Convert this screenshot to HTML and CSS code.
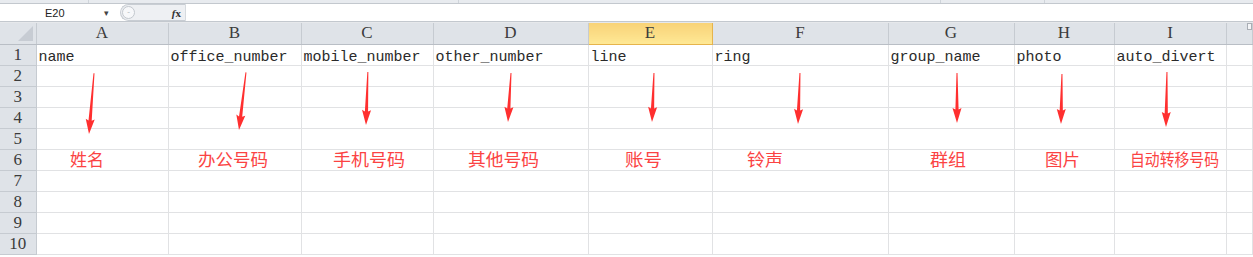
FILE: index.html
```html
<!DOCTYPE html>
<html lang="zh-CN">
<head>
    <meta charset="UTF-8">
    <title>通讯录导入模板</title>
    <link rel="stylesheet" href="styles.css">
</head>
<body>
    <div class="ribbon-edge">
        <span class="sep" style="left: 88px"></span>
        <span class="sep" style="left: 458px"></span>
        <span class="sep" style="left: 940px"></span>
        <span class="sep" style="left: 1044px"></span>
    </div>

    <div class="formula-bar">
        <div class="name-box">
            <span class="cell-ref">E20</span>
            <span class="drop">&#9662;</span>
        </div>
        <div class="fx-zone">
            <span class="grip">-</span>
            <span class="fx"><i>f</i>x</span>
        </div>
        <div class="formula-input"></div>
    </div>

    <div class="sheet">
        <table class="grid">
            <colgroup>
                <col class="c-row">
                <col style="width: 132px">
                <col style="width: 133px">
                <col style="width: 132px">
                <col style="width: 155px">
                <col style="width: 124px">
                <col style="width: 176px">
                <col style="width: 126px">
                <col style="width: 100px">
                <col style="width: 112px">
                <col>
            </colgroup>
            <thead>
                <tr>
                    <th class="corner"><span class="tri"></span></th>
                    <th>A</th>
                    <th>B</th>
                    <th>C</th>
                    <th>D</th>
                    <th class="active">E</th>
                    <th>F</th>
                    <th>G</th>
                    <th>H</th>
                    <th>I</th>
                    <th class="split"><span class="split-box"></span></th>
                </tr>
            </thead>
            <tbody>
                <tr>
                    <th>1</th>
                    <td>name</td>
                    <td>office_number</td>
                    <td>mobile_number</td>
                    <td>other_number</td>
                    <td>line</td>
                    <td>ring</td>
                    <td>group_name</td>
                    <td>photo</td>
                    <td>auto_divert</td>
                    <td></td>
                </tr>
                <tr><th>2</th><td></td><td></td><td></td><td></td><td></td><td></td><td></td><td></td><td></td><td></td></tr>
                <tr><th>3</th><td></td><td></td><td></td><td></td><td></td><td></td><td></td><td></td><td></td><td></td></tr>
                <tr><th>4</th><td></td><td></td><td></td><td></td><td></td><td></td><td></td><td></td><td></td><td></td></tr>
                <tr><th>5</th><td></td><td></td><td></td><td></td><td></td><td></td><td></td><td></td><td></td><td></td></tr>
                <tr><th>6</th><td></td><td></td><td></td><td></td><td></td><td></td><td></td><td></td><td></td><td></td></tr>
                <tr><th>7</th><td></td><td></td><td></td><td></td><td></td><td></td><td></td><td></td><td></td><td></td></tr>
                <tr><th>8</th><td></td><td></td><td></td><td></td><td></td><td></td><td></td><td></td><td></td><td></td></tr>
                <tr><th>9</th><td></td><td></td><td></td><td></td><td></td><td></td><td></td><td></td><td></td><td></td></tr>
                <tr><th>10</th><td></td><td></td><td></td><td></td><td></td><td></td><td></td><td></td><td></td><td></td></tr>
            </tbody>
        </table>

        <!-- annotations drawn over the sheet -->
        <svg class="notes" width="1253" height="257" viewBox="0 0 1253 257">
            <g class="arrows">
                <polygon transform="translate(89 134) rotate(4.7)" points="0,0 -4.5,-15 -1.6,-13.5 -0.5,-61 0.5,-61 1.6,-13.5 4.5,-15"/>
                <polygon transform="translate(239 130) rotate(6.9)" points="0,0 -4.5,-15 -1.6,-13.5 -0.5,-58 0.5,-58 1.6,-13.5 4.5,-15"/>
                <polygon transform="translate(366 125) rotate(2)" points="0,0 -4.5,-15 -1.6,-13.5 -0.5,-53 0.5,-53 1.6,-13.5 4.5,-15"/>
                <polygon transform="translate(508 122) rotate(3.5)" points="0,0 -4.5,-15 -1.6,-13.5 -0.5,-49 0.5,-49 1.6,-13.5 4.5,-15"/>
                <polygon transform="translate(652 122) rotate(2.3)" points="0,0 -4.5,-15 -1.6,-13.5 -0.5,-49 0.5,-49 1.6,-13.5 4.5,-15"/>
                <polygon transform="translate(798 124) rotate(2.2)" points="0,0 -4.5,-15 -1.6,-13.5 -0.5,-51 0.5,-51 1.6,-13.5 4.5,-15"/>
                <polygon transform="translate(957 123)" points="0,0 -4.5,-15 -1.6,-13.5 -0.5,-50 0.5,-50 1.6,-13.5 4.5,-15"/>
                <polygon transform="translate(1061 124) rotate(1.1)" points="0,0 -4.5,-15 -1.6,-13.5 -0.5,-50 0.5,-50 1.6,-13.5 4.5,-15"/>
                <polygon transform="translate(1166 127) rotate(1)" points="0,0 -4.5,-15 -1.6,-13.5 -0.5,-55 0.5,-55 1.6,-13.5 4.5,-15"/>
            </g>
            <g class="labels">
                <text x="70" y="166" textLength="34" lengthAdjust="spacingAndGlyphs">姓名</text>
                <text x="198" y="166" textLength="70" lengthAdjust="spacingAndGlyphs">办公号码</text>
                <text x="333" y="166" textLength="72" lengthAdjust="spacingAndGlyphs">手机号码</text>
                <text x="468" y="166" textLength="71" lengthAdjust="spacingAndGlyphs">其他号码</text>
                <text x="625" y="166" textLength="37" lengthAdjust="spacingAndGlyphs">账号</text>
                <text x="747" y="166" textLength="36" lengthAdjust="spacingAndGlyphs">铃声</text>
                <text x="930" y="166" textLength="36" lengthAdjust="spacingAndGlyphs">群组</text>
                <text x="1045" y="166" textLength="35" lengthAdjust="spacingAndGlyphs">图片</text>
                <text x="1130" y="166" textLength="89" lengthAdjust="spacingAndGlyphs">自动转移号码</text>
            </g>
        </svg>
    </div>
</body>
</html>
```

FILE: styles.css
```css
body {
    margin: 0;
    width: 1253px;
    height: 257px;
    overflow: hidden;
    background: #fff;
    font-family: "Liberation Serif", serif;
}

/* Bottom edge of the ribbon */
.ribbon-edge {
    position: relative;
    height: 3px;
    background: #e8ebef;
    border-bottom: 1px solid #c3c8ce;
}

.ribbon-edge .sep {
    position: absolute;
    top: 0;
    bottom: 0;
    width: 1px;
    background: #cfd4da;
}

/* Formula bar */
.formula-bar {
    display: flex;
    height: 17px;
    background: #fff;
    border-bottom: 1px solid #c3c8ce;
}

.name-box {
    width: 120px;
    display: flex;
    align-items: center;
    font-family: "Liberation Sans", sans-serif;
    font-size: 11px;
    color: #222;
}

.cell-ref {
    margin-left: 45px;
}

.drop {
    margin-left: 39px;
    font-size: 9px;
    color: #444;
}

.fx-zone {
    width: 66px;
    display: flex;
    align-items: center;
    justify-content: space-between;
    background: #eef0f3;
    border: 1px solid #c8cdd3;
    border-right-color: #d6dade;
    border-radius: 9px 0 0 9px;
    box-sizing: border-box;
    padding: 0 4px 0 1px;
}

.grip {
    width: 13px;
    height: 13px;
    border: 1px solid #c3c8ce;
    border-radius: 50%;
    background: #f7f8fa;
    font-size: 8px;
    line-height: 11px;
    color: #b5bac0;
    text-align: center;
    box-sizing: border-box;
}

.fx {
    font-family: "Liberation Serif", serif;
    font-size: 11px;
    font-weight: bold;
    color: #333;
}

.formula-input {
    flex: 1;
}

/* Sheet */
.sheet {
    position: relative;
    border-top: 1px solid #e6e8eb;
    background: #e6e8eb;
}

.grid {
    border-collapse: collapse;
    table-layout: fixed;
    width: 1253px;
    background: #fff;
}

.c-row {
    width: 36px;
}

.grid th {
    height: 21px;
    padding: 0;
    box-sizing: border-box;
    background: #dfe3e8;
    border-right: 1px solid #c6cbd1;
    border-bottom: 1px solid #c6cbd1;
    font-family: "Liberation Serif", serif;
    font-weight: normal;
    font-size: 17px;
    color: #3b3b3b;
    text-align: center;
    line-height: 20px;
}

.grid thead th {
    border-bottom-color: #b9bec5;
}

.grid thead th.active {
    background: linear-gradient(#f8d277, #fee895);
    border-right-color: #e6b44c;
    border-bottom-color: #e6b44c;
}

.grid .corner,
.grid .split {
    position: relative;
}

.corner .tri {
    position: absolute;
    right: 3px;
    bottom: 3px;
    width: 0;
    height: 0;
    border-left: 15px solid transparent;
    border-bottom: 15px solid #c7ccd3;
}

.split-box {
    position: absolute;
    right: 0;
    top: 0;
    width: 3px;
    height: 5px;
    border: 1px solid #a9aeb5;
    background: #f4f5f7;
}

.grid td {
    height: 21px;
    padding: 0 0 1px 2px;
    box-sizing: border-box;
    border-right: 1px solid #e1e2e4;
    border-bottom: 1px solid #e1e2e4;
    font-family: "Liberation Mono", monospace;
    font-size: 15px;
    color: #2a2a2a;
    white-space: nowrap;
    overflow: hidden;
    line-height: 13px;
    vertical-align: bottom;
}

/* Annotation layer */
.notes {
    position: absolute;
    left: 0;
    top: -23px;
    pointer-events: none;
}

.arrows polygon {
    fill: #ff2f2f;
}

.labels text {
    font-family: "Noto Sans CJK SC", sans-serif;
    font-size: 17px;
    fill: #fb4343;
}
```
